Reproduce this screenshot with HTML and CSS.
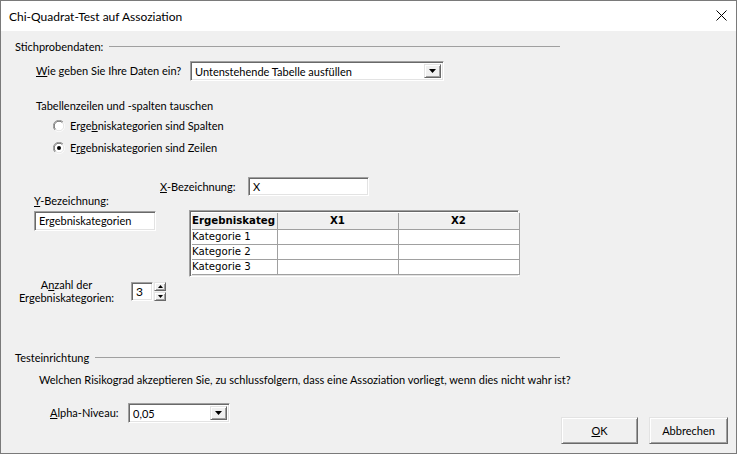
FILE: index.html
```html
<!DOCTYPE html>
<html lang="de">
<head>
<meta charset="utf-8">
<title>Chi-Quadrat-Test auf Assoziation</title>
<link rel="stylesheet" href="styles.css">
</head>
<body>
<div class="window">
  <div class="titlebar">
    <span class="title">Chi-Quadrat-Test auf Assoziation</span>
    <svg class="close" width="11" height="11" viewBox="0 0 11 11"><path d="M0.5 0.5L10.5 10.5M10.5 0.5L0.5 10.5" stroke="#000" stroke-width="1" fill="none"/></svg>
  </div>
  <div class="content">
    <div class="group-head head-sample"><span class="group-label">Stichprobendaten:</span><span class="rule"></span></div>

    <div class="method-row">
      <span class="label method-label"><u>W</u>ie geben Sie Ihre Daten ein?</span>
      <div class="combo sunken method-combo">
        <span class="combo-text">Untenstehende Tabelle ausfüllen</span>
        <span class="combo-btn raised"><svg width="7" height="4" viewBox="0 0 7 4"><path d="M0 0H7L3.5 4Z" fill="#000"/></svg></span>
      </div>
    </div>

    <div class="label sub-head">Tabellenzeilen und -spalten tauschen</div>

    <div class="radio-row radio-first">
      <svg class="radio" width="12" height="12" viewBox="0 0 12 12">
        <circle cx="6" cy="6" r="5.5" fill="#fff" stroke="#fff"/>
        <path d="M1.9 10.1A5.5 5.5 0 0 1 10.1 1.9" stroke="#a0a0a0" fill="none"/>
        <path d="M2.6 9.4A4.5 4.5 0 0 1 9.4 2.6" stroke="#696969" fill="none"/>
        <path d="M9.4 2.6A4.5 4.5 0 0 1 2.6 9.4" stroke="#e3e3e3" fill="none"/>
      </svg>
      <span class="label radio-label">Erge<u>b</u>niskategorien sind Spalten</span>
    </div>
    <div class="radio-row radio-second">
      <svg class="radio" width="12" height="12" viewBox="0 0 12 12">
        <circle cx="6" cy="6" r="5.5" fill="#fff" stroke="#fff"/>
        <path d="M1.9 10.1A5.5 5.5 0 0 1 10.1 1.9" stroke="#a0a0a0" fill="none"/>
        <path d="M2.6 9.4A4.5 4.5 0 0 1 9.4 2.6" stroke="#696969" fill="none"/>
        <path d="M9.4 2.6A4.5 4.5 0 0 1 2.6 9.4" stroke="#e3e3e3" fill="none"/>
        <circle cx="6" cy="6" r="2" fill="#000"/>
      </svg>
      <span class="label radio-label">E<u>r</u>gebniskategorien sind Zeilen</span>
    </div>

    <div class="middle">
      <div class="left-col">
        <div class="label"><u>Y</u>-Bezeichnung:</div>
        <div class="field sunken y-field">Ergebniskategorien</div>
      </div>
      <div class="right-col">
        <div class="x-row">
          <span class="label x-label"><u>X</u>-Bezeichnung:</span>
          <div class="field sunken x-field">X</div>
        </div>
        <div class="grid-wrap sunken">
          <table class="grid">
            <colgroup><col class="c1"><col class="c2"><col class="c3"></colgroup>
            <thead>
              <tr><th class="th-left">Ergebniskateg</th><th>X1</th><th>X2</th></tr>
            </thead>
            <tbody>
              <tr><td>Kategorie 1</td><td></td><td></td></tr>
              <tr><td>Kategorie 2</td><td></td><td></td></tr>
              <tr><td>Kategorie 3</td><td></td><td></td></tr>
            </tbody>
          </table>
        </div>
      </div>
    </div>

    <div class="count-row">
      <div class="count-label">A<u>n</u>zahl der<br>Ergebniskategorien:</div>
      <div class="spinner">
        <div class="field sunken spin-field">3</div>
        <div class="spin-btns">
          <span class="spin-btn raised"><svg width="5" height="3" viewBox="0 0 5 3"><path d="M0 3H5L2.5 0Z" fill="#000"/></svg></span>
          <span class="spin-btn raised"><svg width="5" height="3" viewBox="0 0 5 3"><path d="M0 0H5L2.5 3Z" fill="#000"/></svg></span>
        </div>
      </div>
    </div>

    <div class="group-head head-test"><span class="group-label">Testeinrichtung</span><span class="rule"></span></div>

    <div class="label question">Welchen Risikograd akzeptieren Sie, zu schlussfolgern, dass eine Assoziation vorliegt, wenn dies nicht wahr ist?</div>

    <div class="bottom-row">
      <div class="alpha-row">
        <span class="label alpha-label"><u>A</u>lpha-Niveau:</span>
        <div class="combo sunken alpha-combo">
          <span class="combo-text">0,05</span>
          <span class="combo-btn raised"><svg width="7" height="4" viewBox="0 0 7 4"><path d="M0 0H7L3.5 4Z" fill="#000"/></svg></span>
        </div>
      </div>
      <div class="buttons">
        <button class="btn raised btn-ok"><u>O</u>K</button>
        <button class="btn raised btn-cancel">Abbrechen</button>
      </div>
    </div>
  </div>
</div>
</body>
</html>
```

FILE: styles.css
```css
* { box-sizing: border-box; }
html, body { margin: 0; padding: 0; }
body {
  width: 737px;
  height: 454px;
  overflow: hidden;
  font-family: Lato, "Liberation Sans", sans-serif;
  font-size: 11px;
  color: #000;
  background: #f0f0f0;
}
u { text-decoration: underline; text-underline-offset: 1px; }

.window {
  width: 737px;
  height: 454px;
  border: 1px solid #7a7a7a;
  display: flex;
  flex-direction: column;
  background: #f0f0f0;
}
.titlebar {
  height: 30px;
  flex: none;
  background: #fff;
  display: flex;
  align-items: center;
  justify-content: space-between;
  padding: 0 9px 0 8px;
}
.title { font-size: 12px; }
.close { margin-top: -1px; }

.content {
  flex: 1;
  display: flex;
  flex-direction: column;
  align-items: flex-start;
}
.label, .group-label { line-height: 14px; white-space: nowrap; }

.sunken {
  border: 1px solid;
  border-color: #a0a0a0 #ffffff #ffffff #a0a0a0;
  box-shadow: inset 1px 1px 0 #696969, inset -1px -1px 0 #e3e3e3;
  background: #fff;
}
.raised {
  border: 1px solid;
  border-color: #e3e3e3 #696969 #696969 #e3e3e3;
  box-shadow: inset 1px 1px 0 #ffffff, inset -1px -1px 0 #a0a0a0;
  background: #f0f0f0;
}

.group-head {
  display: flex;
  align-items: flex-start;
  width: 545px;
  height: 14px;
  margin-left: 14px;
}
.rule {
  flex: 1;
  margin-left: 6px;
  margin-top: 6px;
  border-top: 1px solid #a0a0a0;
}
.head-sample { margin-top: 9px; }
.head-test { margin-top: 47px; }

.method-row {
  display: flex;
  align-items: center;
  height: 20px;
  margin-top: 7px;
  margin-left: 35px;
}
.method-label { width: 154px; }

.combo {
  display: flex;
  align-items: stretch;
  height: 20px;
  padding: 2px;
}
.combo-text {
  flex: 1;
  line-height: 16px;
  padding-left: 2px;
  white-space: nowrap;
  overflow: hidden;
}
.combo-btn {
  width: 17px;
  display: flex;
  align-items: center;
  justify-content: center;
}
.method-combo { width: 254px; }

.sub-head { margin-top: 18px; margin-left: 35px; }

.radio-row {
  display: flex;
  align-items: center;
  height: 14px;
  margin-left: 52px;
}
.radio-first { margin-top: 6px; }
.radio-second { margin-top: 8px; }
.radio { flex: none; }
.radio-label { margin-left: 5px; }

.middle {
  display: flex;
  margin-top: 22px;
}
.left-col {
  width: 122px;
  margin-left: 33px;
  padding-top: 17px;
}
.field {
  height: 20px;
  line-height: 18px;
  padding-left: 4px;
  white-space: nowrap;
}
.y-field { margin-top: 3px; }
.right-col { margin-left: 4px; }
.x-row {
  display: flex;
  align-items: center;
  height: 19px;
}
.x-label { width: 88px; }
.x-field { width: 121px; height: 19px; line-height: 17px; }

.grid-wrap {
  width: 330px;
  margin-top: 14px;
  margin-left: 29px;
  padding: 2px 1px 1px 2px;
}
.grid {
  width: 100%;
  border-collapse: collapse;
  table-layout: fixed;
  font-family: "DejaVu Sans", Tahoma, sans-serif;
  font-size: 10.2px;
}
.c1 { width: 85px; }
.c2 { width: 121px; }
.c3 { width: 121px; }
.grid th, .grid td {
  border: 1px solid #a0a0a0;
  padding: 0;
  white-space: nowrap;
  overflow: hidden;
  line-height: 13px;
}
.grid tr:first-child th { border-top: none; }
.grid th:first-child, .grid td:first-child { border-left: none; }
.grid th {
  height: 16px;
  background: #f0f0f0;
  font-weight: bold;
  text-align: center;
}
.grid .th-left { text-align: left; }
.grid td { height: 15px; background: #fff; }

.count-row {
  display: flex;
  align-items: flex-start;
  margin-top: 1px;
  margin-left: 17px;
}
.count-label {
  width: 97px;
  text-align: center;
  line-height: 13px;
}
.spinner {
  display: flex;
  margin-left: 16px;
  margin-top: 4px;
}
.spin-field { width: 22px; height: 19px; line-height: 17px; padding-left: 4px; font-size: 12px; }
.spin-btns {
  display: flex;
  flex-direction: column;
  margin-left: 1px;
}
.spin-btn {
  width: 12px;
  height: 9px;
  display: flex;
  align-items: center;
  justify-content: center;
}
.spin-btn + .spin-btn { margin-top: 1px; }

.question { margin-top: 8px; margin-left: 38px; }

.bottom-row {
  align-self: stretch;
  display: flex;
  justify-content: space-between;
  height: 41px;
  margin-top: 16px;
}
.alpha-row {
  display: flex;
  align-items: center;
  height: 20px;
  margin-left: 49px;
}
.alpha-label { width: 78px; }
.alpha-combo { width: 102px; }

.buttons {
  align-self: flex-end;
  display: flex;
  gap: 11px;
  margin-right: 8px;
}
.btn {
  height: 27px;
  font-family: Lato, "Liberation Sans", sans-serif;
  font-size: 11px;
  color: #000;
  padding: 0;
}
.btn-ok { width: 77px; }
.btn-cancel { width: 79px; }
```
